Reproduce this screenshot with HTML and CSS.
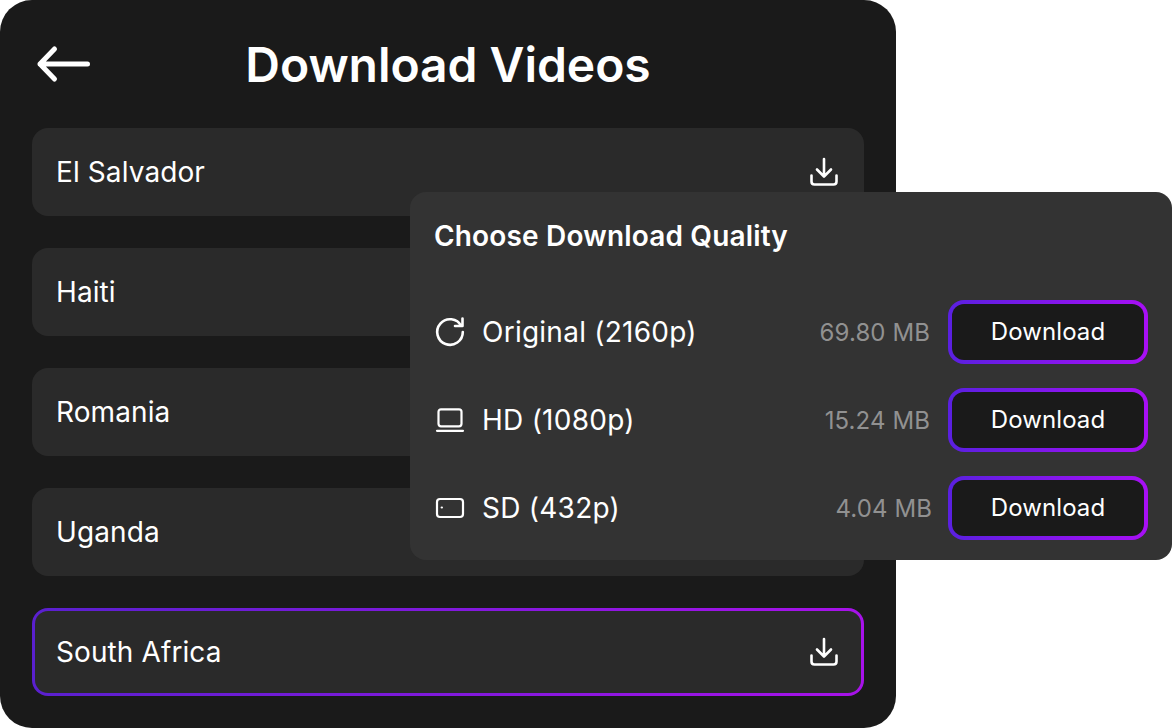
FILE: index.html
```html
<!DOCTYPE html>
<html lang="en">
  <head>
    <meta charset="UTF-8" />
    <meta name="viewport" content="width=device-width, initial-scale=1.0" />
    <title>Download Videos</title>
    <link rel="stylesheet" href="styles.css">
  </head>
  <body>
    <div class="panel">
      <div class="panel-header">
        <button type="button" class="back-btn" aria-label="Back">
          <svg width="56" height="40" viewBox="0 0 56 40" fill="none" stroke="currentColor" stroke-width="5" stroke-linecap="round" stroke-linejoin="round">
            <path d="M4 20H51.500M18.500 5L4 20L18.500 35" />
          </svg>
        </button>
        <h1>Download Videos</h1>
      </div>

      <div class="video-list">
        <div class="video-row">
          <span>El Salvador</span>
          <svg class="download-icon" width="32" height="32" viewBox="0 0 32 32" fill="none" stroke="currentColor" stroke-width="2.6" stroke-linecap="round" stroke-linejoin="round">
            <path d="M16 3V20M9 13.500L16 20.500L23 13.500M3.500 19.500V25.500C3.500 27.300 4.700 28.500 6.500 28.500H25.500C27.300 28.500 28.500 27.300 28.500 25.500V19.500" />
          </svg>
        </div>
        <div class="video-row"><span>Haiti</span></div>
        <div class="video-row"><span>Romania</span></div>
        <div class="video-row"><span>Uganda</span></div>
        <div class="video-row active">
          <span>South Africa</span>
          <svg class="download-icon" width="32" height="32" viewBox="0 0 32 32" fill="none" stroke="currentColor" stroke-width="2.6" stroke-linecap="round" stroke-linejoin="round">
            <path d="M16 3V20M9 13.500L16 20.500L23 13.500M3.500 19.500V25.500C3.500 27.300 4.700 28.500 6.500 28.500H25.500C27.300 28.500 28.500 27.300 28.500 25.500V19.500" />
          </svg>
        </div>
      </div>
    </div>

    <div class="quality-menu">
      <h2>Choose Download Quality</h2>

      <div class="quality-list">
        <div class="quality-row">
          <svg class="quality-icon" width="32" height="32" viewBox="0 0 32 32" fill="none" stroke="currentColor" stroke-width="2.6" stroke-linecap="round" stroke-linejoin="round">
            <path d="M28.500 2.500V10H21M27.300 10A12.800 12.800 0 1 0 28.800 16" />
          </svg>
          <span class="quality-name">Original (2160p)</span>
          <span class="quality-size">69.80 MB</span>
          <button type="button" class="download-btn">Download</button>
        </div>
        <div class="quality-row">
          <svg class="quality-icon" width="32" height="32" viewBox="0 0 32 32" fill="none" stroke="currentColor" stroke-width="2.2" stroke-linecap="round" stroke-linejoin="round">
            <path d="M4.500 19.800V7.800C4.500 6.300 5.500 5.300 7 5.300H25C26.500 5.300 27.500 6.300 27.500 7.800V19.800C27.500 21.300 26.500 22.300 25 22.300H7C5.500 22.300 4.500 21.300 4.500 19.800ZM3 26.800H29" />
          </svg>
          <span class="quality-name">HD (1080p)</span>
          <span class="quality-size">15.24 MB</span>
          <button type="button" class="download-btn">Download</button>
        </div>
        <div class="quality-row">
          <svg class="quality-icon" width="32" height="32" viewBox="0 0 32 32" fill="none" stroke="currentColor" stroke-width="2.2" stroke-linecap="round" stroke-linejoin="round">
            <rect x="3" y="7" width="26" height="18" rx="3" />
            <path d="M7.700 15.500H7.900" />
          </svg>
          <span class="quality-name">SD (432p)</span>
          <span class="quality-size sd">4.04 MB</span>
          <button type="button" class="download-btn">Download</button>
        </div>
      </div>
    </div>
  </body>
</html>
```

FILE: styles.css
```css
body {
  font-family: Inter, 'Noto Sans', sans-serif;
  background: white;
  margin: 0;
  height: 728px;
  position: relative;
  overflow: hidden;
  color: white;
}

.panel {
  width: 896px;
  height: 728px;
  box-sizing: border-box;
  padding: 0 32px;
  background: #1a1a1a;
  border-radius: 32px;
}

.panel-header {
  position: relative;
  height: 128px;
  display: flex;
  align-items: center;
  justify-content: center;
}

.panel-header h1 {
  margin: 2px 0 0;
  font-size: 48px;
  font-weight: 600;
  line-height: 58px;
  letter-spacing: -0.05px;
}

.back-btn {
  position: absolute;
  left: 4px;
  top: 44px;
  padding: 0;
  width: 56px;
  height: 40px;
  background: none;
  border: none;
  color: white;
  cursor: pointer;
}

.back-btn svg {
  display: block;
}

.video-list {
  display: flex;
  flex-direction: column;
  gap: 32px;
}

.video-row {
  height: 88px;
  box-sizing: border-box;
  padding: 0 24px;
  display: flex;
  align-items: center;
  justify-content: space-between;
  background: #2a2a2a;
  border-radius: 16px;
  font-size: 28px;
  letter-spacing: 0.1px;
}

.video-row.active {
  padding: 0 21px;
  border: 3px solid transparent;
  background: linear-gradient(#2a2a2a, #2a2a2a) padding-box,
    linear-gradient(90deg, #5a20cf 0%, #a812ea 100%) border-box;
}

.quality-menu {
  position: absolute;
  left: 410px;
  top: 192px;
  width: 762px;
  height: 368px;
  box-sizing: border-box;
  padding: 0 24px 20px;
  background: #333333;
  border-radius: 16px;
}

.quality-menu h2 {
  margin: 0;
  height: 108px;
  box-sizing: border-box;
  padding-top: 28px;
  font-size: 28px;
  line-height: 32px;
  font-weight: 600;
  letter-spacing: 0.17px;
}

.quality-list {
  display: flex;
  flex-direction: column;
  gap: 24px;
}

.quality-row {
  height: 64px;
  display: flex;
  align-items: center;
  font-size: 28px;
}

.quality-icon {
  flex: none;
  margin-right: 16px;
}

.quality-name {
  flex: 1;
  letter-spacing: 0.25px;
}

.quality-size {
  margin-right: 18px;
  font-size: 24px;
  letter-spacing: 0.1px;
  color: #919191;
}

.quality-size.sd {
  margin-right: 16px;
}

.download-btn {
  width: 200px;
  height: 64px;
  box-sizing: border-box;
  padding: 0 0 2px;
  border: 4px solid transparent;
  border-radius: 16px;
  background: linear-gradient(#1a1a1a, #1a1a1a) padding-box,
    linear-gradient(90deg, #5a20e0 0%, #a80ff5 100%) border-box;
  color: white;
  font-family: inherit;
  font-size: 24px;
  letter-spacing: 0.1px;
  cursor: pointer;
}
```
